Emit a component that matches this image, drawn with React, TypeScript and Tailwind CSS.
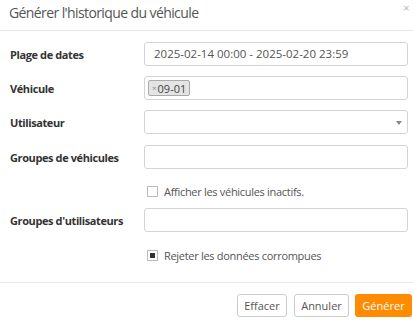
const font = { fontFamily: '"Open Sans", "Liberation Sans", sans-serif' };

function Row({ label, children }: { label?: string; children: React.ReactNode }) {
  return (
    <div className="flex h-[24px] items-center">
      <div className="w-[144px] shrink-0 pl-[10px] text-[11px] font-bold leading-none tracking-[-0.4px] text-[#333]">{label}</div>
      <div className="flex-1 pr-[5px]">{children}</div>
    </div>
  );
}

function Input({ children }: { children?: React.ReactNode }) {
  return (
    <div className="relative flex h-[24px] items-center rounded-[3px] border border-[#d4d4d4] bg-white px-[9px] text-[11.5px] leading-none text-[#555]">
      {children}
    </div>
  );
}

function Check({ checked, label }: { checked?: boolean; label: string }) {
  return (
    <div className="flex h-[14px] items-center pl-[147px] text-[11px] leading-none tracking-[-0.3px] text-[#555]">
      <span className="flex h-[11px] w-[11px] items-center justify-center border border-[#bbb] bg-white">
        {checked && <span className="h-[5px] w-[5px] bg-[#333]" />}
      </span>
      <span className="ml-[6px]">{label}</span>
    </div>
  );
}

export default function App() {
  return (
    <div className="h-[322px] w-[413px] bg-white" style={font}>
      <div className="relative flex h-[31px] items-center border-b border-[#e8e8e8] pb-[4px] pl-[9px] text-[14px] leading-none tracking-[-0.6px] text-[#555]">
        Générer l'historique du véhicule
        <span className="absolute right-[4px] top-[2px] text-[11px] leading-none text-[#b5b5b5]">×</span>
      </div>
      <div className="flex flex-col pt-[11px]">
        <Row label="Plage de dates">
          <Input>2025-02-14 00:00 - 2025-02-20 23:59</Input>
        </Row>
        <div className="mt-[10px]">
          <Row label="Véhicule">
            <Input>
              <span className="-ml-[6px] flex h-[16px] items-center rounded-[2px] border border-[#aaa] bg-[#e4e4e4] px-[3px] text-[11px] text-[#444]">
                <span className="mr-[1px] text-[8px] text-[#888]">×</span>09-01
              </span>
            </Input>
          </Row>
        </div>
        <div className="mt-[10px]">
          <Row label="Utilisateur">
            <Input>
              <span className="absolute right-[5px] top-[10px] h-0 w-0 border-x-[3px] border-t-[4px] border-x-transparent border-t-[#888]" />
            </Input>
          </Row>
        </div>
        <div className="mt-[11px]">
          <Row label="Groupes de véhicules">
            <Input />
          </Row>
        </div>
        <div className="mt-[15px]">
          <Check label="Afficher les véhicules inactifs." />
        </div>
        <div className="mt-[10px]">
          <Row label="Groupes d'utilisateurs">
            <Input />
          </Row>
        </div>
        <div className="mt-[16px]">
          <Check checked label="Rejeter les données corrompues" />
        </div>
      </div>
      <div className="mt-[20px] flex justify-end gap-[7px] border-t border-[#e8e8e8] pr-[1px] pt-[11px] text-[11px] leading-none">
        <button className="h-[23px] w-[50px] rounded-[3px] border border-[#ccc] bg-white text-[#555]">Effacer</button>
        <button className="mr-[-1px] h-[23px] w-[55px] rounded-[3px] border border-[#ccc] bg-white text-[#555]">Annuler</button>
        <button className="h-[23px] w-[57px] rounded-[3px] bg-[#ff8c00] text-white">Générer</button>
      </div>
    </div>
  );
}
